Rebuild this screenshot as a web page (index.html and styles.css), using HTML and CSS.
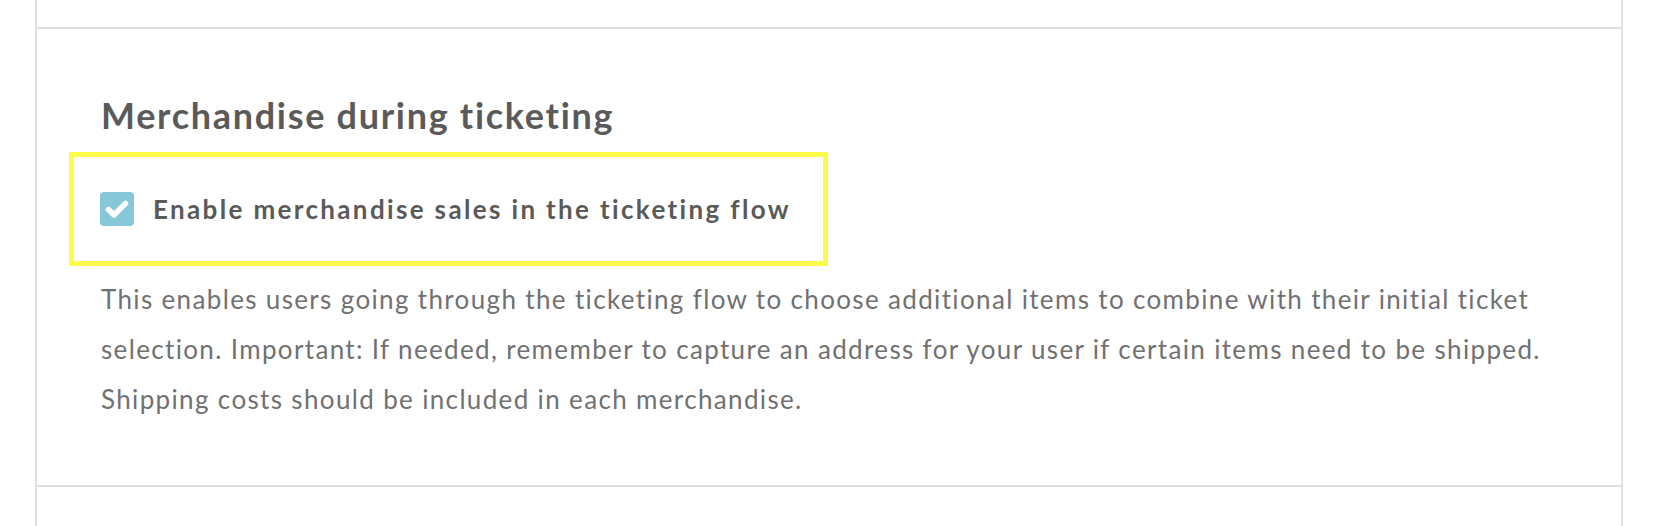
FILE: index.html
```html
<!DOCTYPE html>
<html lang="en">
<head>
<meta charset="utf-8">
<title>Merchandise during ticketing</title>
<link rel="stylesheet" href="styles.css">
</head>
<body>
<div class="page">
  <div class="panel">
    <div class="section section-prev"></div>
    <section class="section section-main">
      <h2 class="title">Merchandise during ticketing</h2>
      <div class="highlight">
        <label class="option">
          <span class="checkbox" aria-hidden="true">
            <svg viewBox="0 0 34 34" width="34" height="34">
              <rect x="0" y="0" width="34" height="34" rx="4" fill="#86c8da"/>
              <path d="M8.5 17.5 L14 23 L25.5 11.5" fill="none" stroke="#ffffff" stroke-width="5.5" stroke-linecap="round" stroke-linejoin="round"/>
            </svg>
          </span>
          <span class="option-text">Enable merchandise sales in the ticketing flow</span>
        </label>
      </div>
      <p class="desc">This enables users going through the ticketing flow to choose additional items to combine with their initial ticket selection. Important: If needed, remember to capture an address for your user if certain items need to be shipped. Shipping costs should be included in each merchandise.</p>
    </section>
    <div class="section section-next"></div>
  </div>
</div>
</body>
</html>
```
FILE: styles.css
```css
html, body {
  margin: 0;
  padding: 0;
  background: #ffffff;
}
body {
  font-family: "Lato", "Noto Sans", sans-serif;
  color: #5b5b5b;
}
.page {
  padding-left: 35px;
  width: 1588px;
}
.panel {
  border-left: 2px solid #e0e0e2;
  border-right: 2px solid #e0e0e2;
  height: 526px;
  display: flex;
  flex-direction: column;
}
.section {
  border-bottom: 2px solid #dedede;
}
.section-prev {
  height: 27px;
}
.section-main {
  padding: 64px 64px 0 64px;
  height: 392px;
}
.section-next {
  border-bottom: none;
  flex: 1;
}
.title {
  margin: 0;
  font-size: 36px;
  line-height: 44px;
  font-weight: 700;
  letter-spacing: 1.7px;
  color: #5a5a5a;
}
.highlight {
  display: inline-block;
  margin: 15px 0 0 -32px;
  border: 5px solid #fdfb4a;
  padding: 35px 32px 35px 26px;
}
.option {
  display: flex;
  align-items: center;
  gap: 19px;
  height: 34px;
}
.checkbox {
  display: block;
  width: 34px;
  height: 34px;
}
.checkbox svg {
  display: block;
}
.option-text {
  font-size: 26px;
  font-weight: 700;
  letter-spacing: 2.35px;
  color: #5a5a5a;
}
.desc {
  margin: 8px 0 0 0;
  font-size: 26px;
  line-height: 50px;
  letter-spacing: 1.35px;
  color: #717171;
}
```
